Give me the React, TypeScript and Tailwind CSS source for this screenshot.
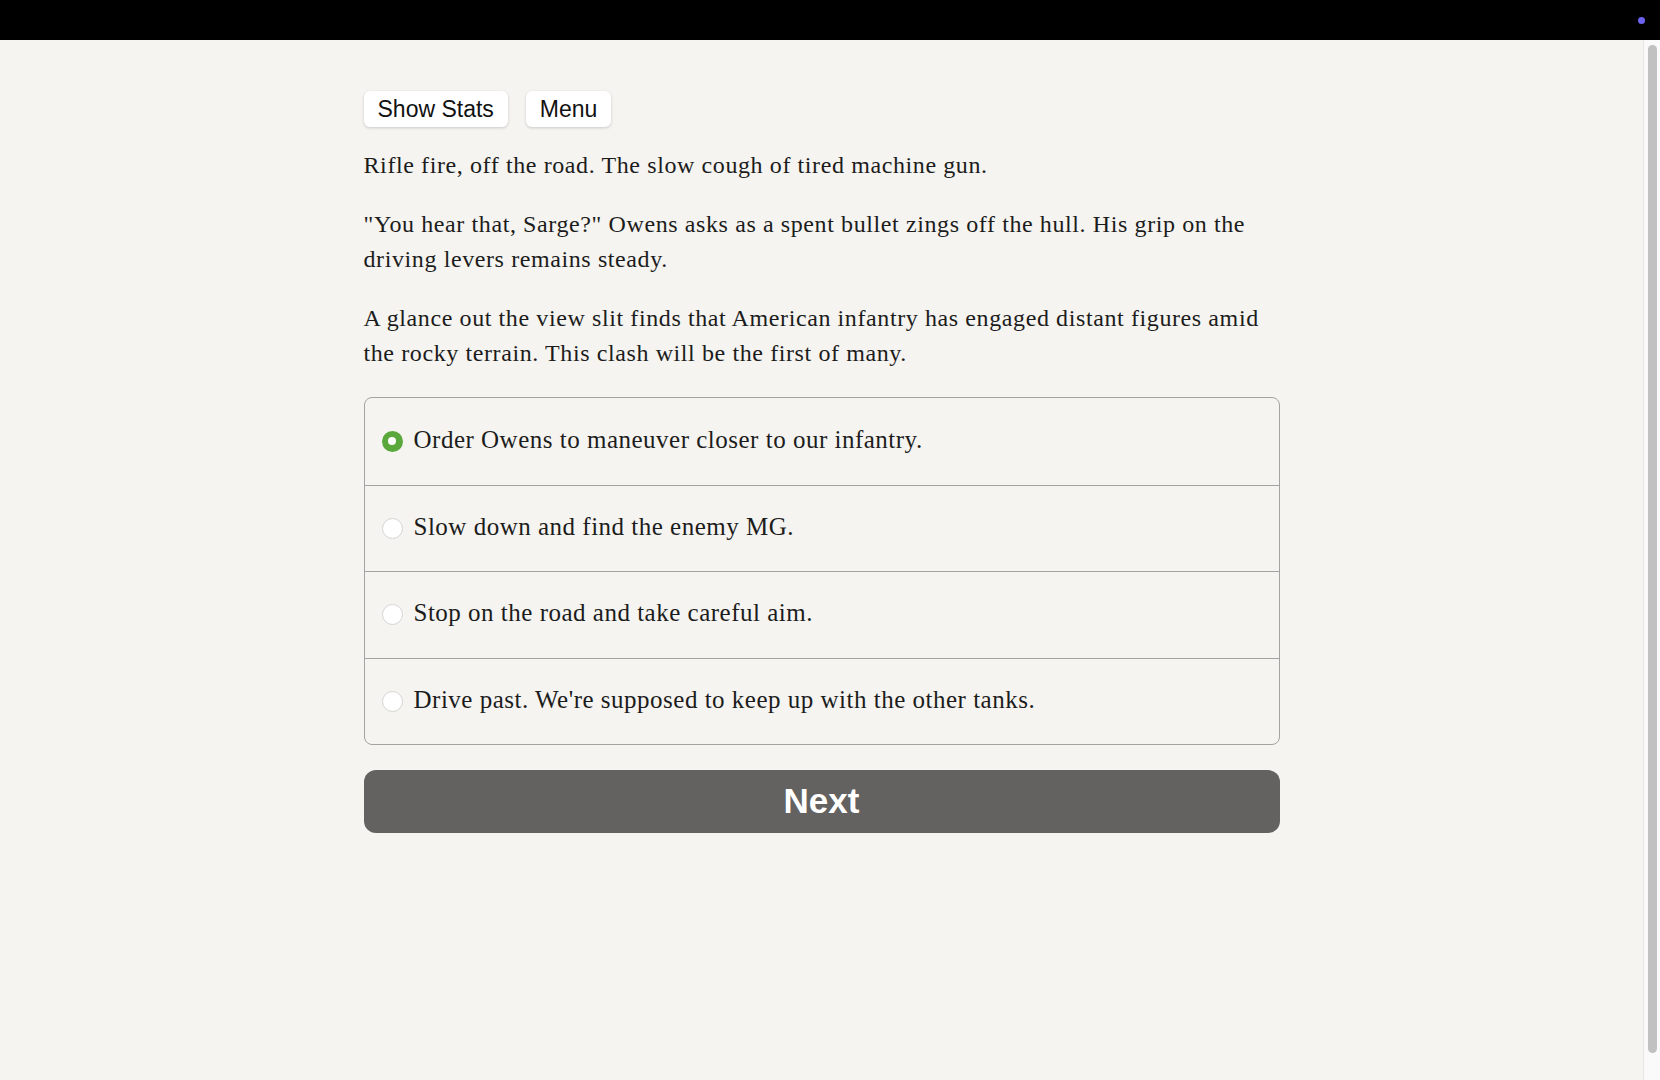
import { useState } from "react";

const PARAGRAPHS = [
  "Rifle fire, off the road. The slow cough of tired machine gun.",
  "\"You hear that, Sarge?\" Owens asks as a spent bullet zings off the hull. His grip on the driving levers remains steady.",
  "A glance out the view slit finds that American infantry has engaged distant figures amid the rocky terrain. This clash will be the first of many.",
];

const CHOICES = [
  "Order Owens to maneuver closer to our infantry.",
  "Slow down and find the enemy MG.",
  "Stop on the road and take careful aim.",
  "Drive past. We're supposed to keep up with the other tanks.",
];

const SANS = "font-['Liberation_Sans',Arial,sans-serif]";
const SERIF = "font-['Liberation_Serif','Times_New_Roman',serif]";

function Radio({ checked }: { checked: boolean }) {
  if (checked) {
    return (
      <span className="flex h-[21px] w-[21px] shrink-0 items-center justify-center rounded-full bg-[#5aa83c]">
        <span className="h-[8px] w-[8px] rounded-full bg-white" />
      </span>
    );
  }
  return (
    <span className="h-[21px] w-[21px] shrink-0 rounded-full border border-[#d4d4d2] bg-white" />
  );
}

export default function App() {
  const [selected, setSelected] = useState(0);

  return (
    <div className="flex h-screen flex-col bg-[#f5f4f0]">
      <div className="flex h-10 shrink-0 items-center justify-end bg-black pr-[15px]">
        <span className="h-[7px] w-[7px] rounded-full bg-[#6b63f0]" />
      </div>

      <div className="flex min-h-0 flex-1">
        <main className="flex-1">
          <div className="mx-auto w-[916px] pt-[51px]">
            <div className={`flex gap-[18px] ${SANS}`}>
              <button className="h-9 rounded-md bg-white px-[14px] text-[23px] leading-none text-[#111] shadow-[0_1px_3px_rgba(0,0,0,0.18)]">
                Show Stats
              </button>
              <button className="h-9 rounded-md bg-white px-[14px] text-[23px] leading-none text-[#111] shadow-[0_1px_3px_rgba(0,0,0,0.18)]">
                Menu
              </button>
            </div>

            <div className={`mt-[21px] flex flex-col gap-[24px] text-[24px] leading-[35px] tracking-[0.6px] text-[#1c1c1c] ${SERIF}`}>
              {PARAGRAPHS.map((p) => (
                <p key={p}>{p}</p>
              ))}
            </div>

            <div className="mt-[26px] overflow-hidden rounded-lg border border-[#a3a3a1]">
              {CHOICES.map((choice, i) => (
                <label
                  key={choice}
                  onClick={() => setSelected(i)}
                  className={`flex h-[86.5px] cursor-pointer items-center gap-[11px] pl-[17px] pr-4 ${
                    i > 0 ? "border-t border-[#a3a3a1]" : ""
                  }`}
                >
                  <Radio checked={selected === i} />
                  <span className={`-mt-[4px] text-[25px] tracking-[0.5px] text-[#1c1c1c] ${SERIF}`}>
                    {choice}
                  </span>
                </label>
              ))}
            </div>

            <button
              className={`mt-[25px] flex h-[63px] w-full items-center justify-center rounded-xl bg-[#636260] text-[35px] font-bold text-white ${SANS}`}
            >
              Next
            </button>
          </div>
        </main>

        <aside className="flex w-[17px] shrink-0 justify-center border-l border-[#e6e6e4] bg-[#fafafa] pt-[5px] pb-[27px]">
          <div className="w-[9px] rounded-full bg-[#c1c1c1]" />
        </aside>
      </div>
    </div>
  );
}
